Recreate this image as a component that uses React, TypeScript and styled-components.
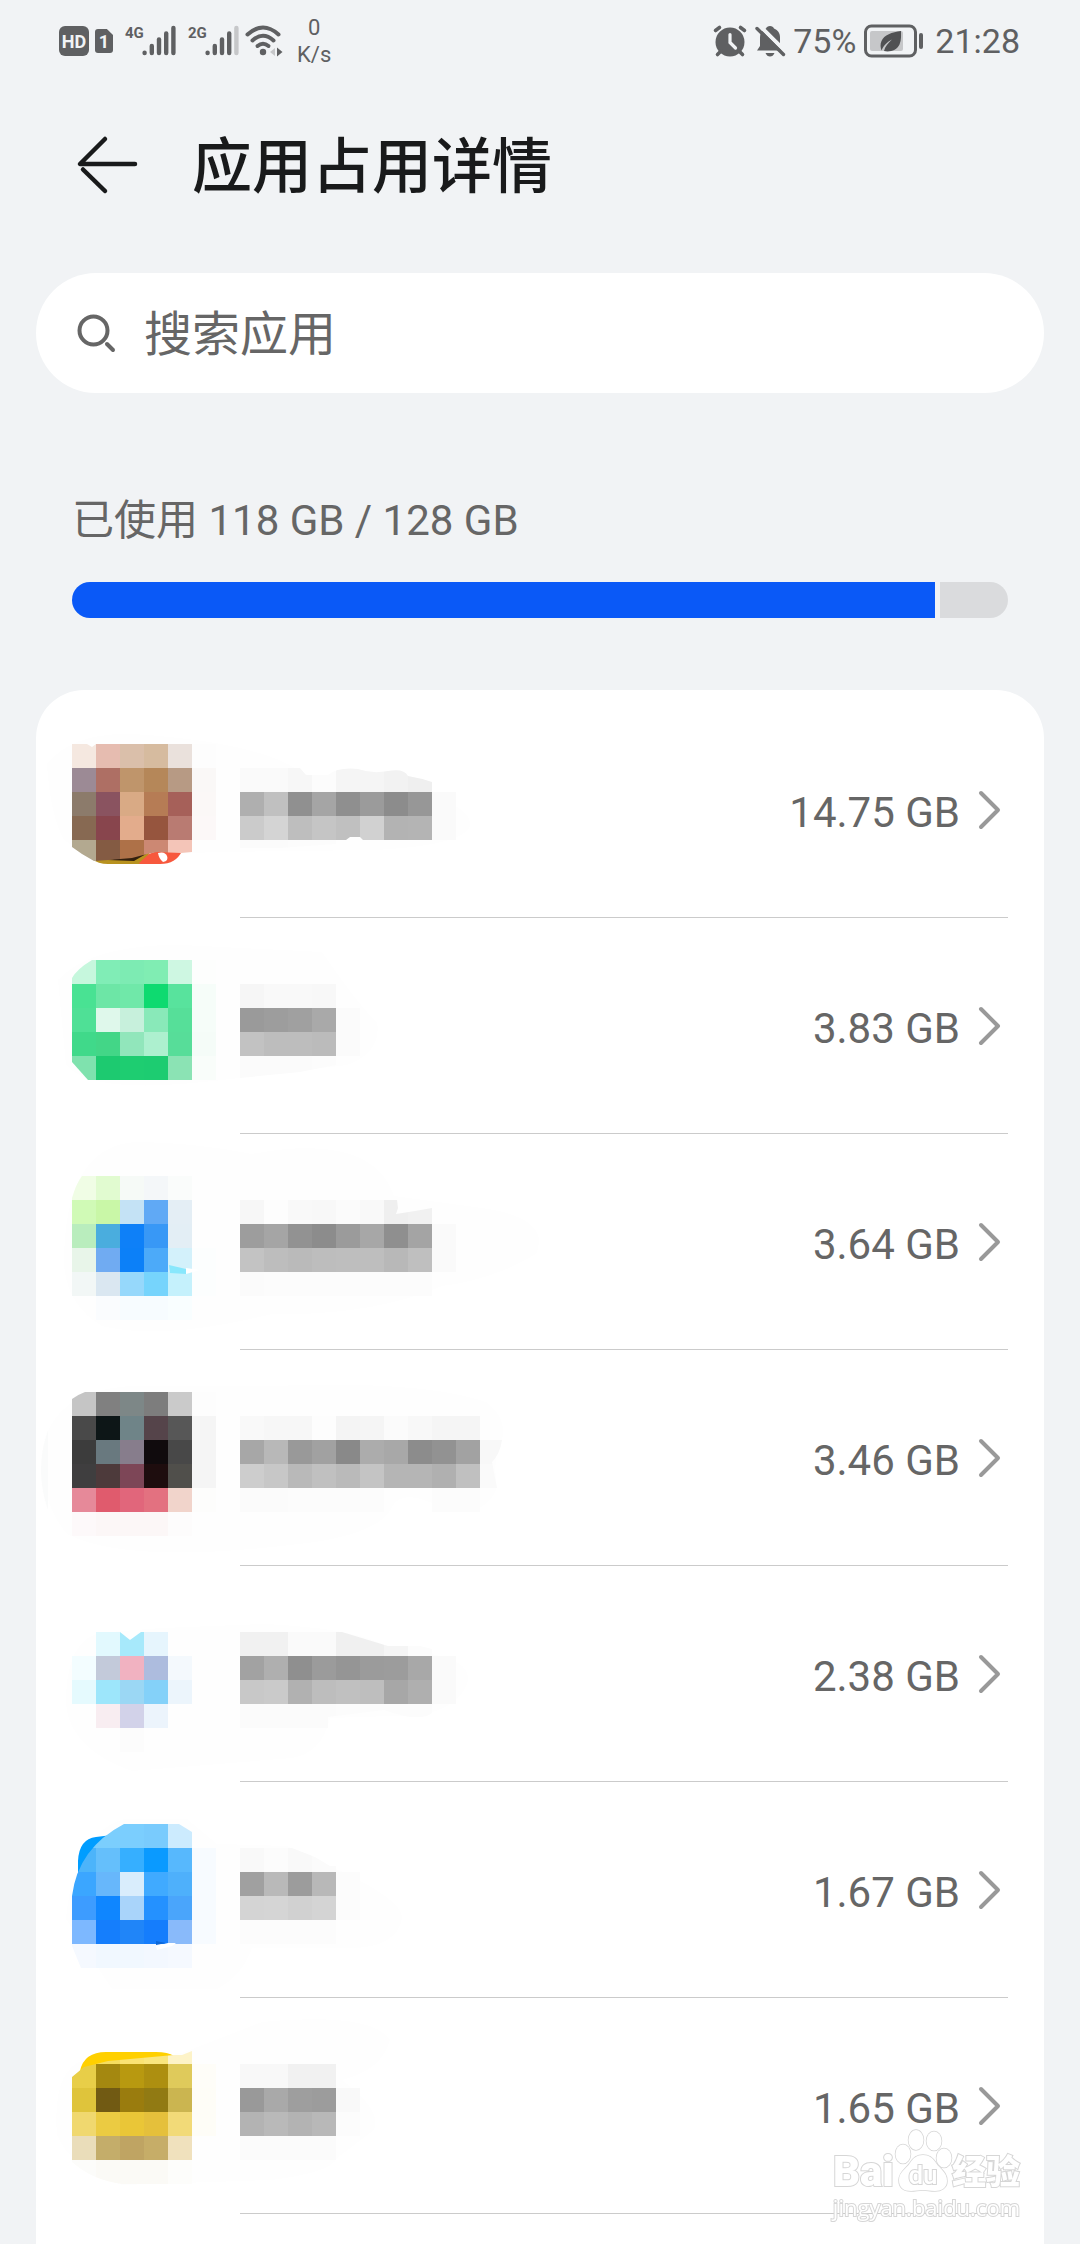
import React from "react";
import styled, { createGlobalStyle } from "styled-components";

const GlobalStyle = createGlobalStyle`
  * { box-sizing: border-box; }
  body {
    margin: 0;
    background: #f1f3f5;
    font-family: Roboto, "Noto Sans CJK SC", sans-serif;
    color: #666;
  }
  button, input { font: inherit; color: inherit; border: 0; padding: 0; background: none; }
  svg { display: block; flex: none; overflow: visible; }
`;

const Page = styled.div`
  display: flex;
  flex-direction: column;
  height: 100vh;
  overflow: hidden;
`;

/* ---------- status bar ---------- */

const StatusBar = styled.div`
  display: flex;
  justify-content: space-between;
  align-items: center;
  height: 82px;
  padding: 0 60px 0 59px;
  flex: none;
  color: #5f6062;
`;

const StatusGroup = styled.div<{ $gap: number }>`
  display: flex;
  align-items: center;
  gap: ${(p) => p.$gap}px;
`;

const HdBadge = styled.span`
  width: 30px;
  height: 30px;
  border-radius: 6px;
  background: #5f6062;
  color: #f1f3f5;
  font-size: 18px;
  font-weight: 700;
  line-height: 31px;
  text-align: center;
`;

const SimBadge = styled.span`
  width: 18px;
  height: 24px;
  border-radius: 3px;
  background: #5f6062;
  clip-path: polygon(0 0, 66% 0, 100% 25%, 100% 100%, 0 100%);
  color: #f1f3f5;
  font-size: 18px;
  font-weight: 700;
  line-height: 25px;
  text-align: center;
`;

const Signal = styled.span`
  display: flex;
  align-items: flex-start;
  height: 32px;
  margin-left: 6px;
`;

const SignalLabel = styled.span`
  width: 17px;
  font-size: 15px;
  font-weight: 700;
  line-height: 16px;
`;

const Speed = styled.span`
  margin-left: 8px;
  font-size: 22px;
  line-height: 27px;
  text-align: center;
`;

const StatusText = styled.span`
  font-size: 34px;
  line-height: 40px;
`;

const SignalBars = ({ level }: { level: number }) => (
  <svg width="34" height="32" viewBox="0 0 34 32" strokeWidth="4.4" strokeLinecap="round">
    {[27.8, 21, 14.5, 8.5, 3].map((y, i) => (
      <path key={y} d={`M${2.6 + i * 7.2} ${y}V28`} stroke={i < level ? "#5f6062" : "#c6c7c9"} />
    ))}
  </svg>
);

const Wifi = () => (
  <svg width="38" height="32" viewBox="0 0 38 32" fill="none" stroke="#5f6062" strokeWidth="4" strokeLinecap="round">
    <path d="M2.5 9.5Q18 -4.500 33.500 9.500" />
    <path d="M7.500 15.500Q18 6 28.500 15.500" />
    <path d="M12.500 21Q18 16.500 23.500 21" />
    <circle cx="18" cy="27" r="3.200" fill="#5f6062" stroke="none" />
    <path d="M25 27l5-4v8z" fill="#c6c7c9" stroke="none" />
    <path d="M32 22.500l5.500 4.500-5.500 4.500z" fill="#5f6062" stroke="none" />
  </svg>
);

const Alarm = () => (
  <svg width="34" height="32" viewBox="0 0 34 32">
    <circle cx="17" cy="17" r="14.500" fill="#5f6062" />
    <path d="M2.500 5.500L6.500 2.500M31.500 5.500L27.500 2.500M4.500 29.500L8 26M29.500 29.500L26 26" stroke="#5f6062" strokeWidth="3.600" strokeLinecap="round" />
    <path d="M17 9.500V17.500L22.500 23" fill="none" stroke="#f1f3f5" strokeWidth="3.200" strokeLinecap="round" />
  </svg>
);

const BellOff = () => (
  <svg width="30" height="32" viewBox="0 0 30 32">
    <path d="M15 1c2 0 3.500 1 4 2.500 4 1.500 6 5 6 9V21l3 4.500H2L5 21v-8.500c0-4 2-7.500 6-9C11.500 2 13 1 15 1z" fill="#5f6062" />
    <path d="M10.500 28h9c-1 2.500-2.500 3.500-4.500 3.500s-3.500-1-4.500-3.500z" fill="#5f6062" />
    <path d="M4 0L31 27" stroke="#f1f3f5" strokeWidth="4" />
    <path d="M2 3.500L28.500 29.500" stroke="#5f6062" strokeWidth="3.400" strokeLinecap="round" />
  </svg>
);

const Battery = () => (
  <svg width="63" height="34" viewBox="0 0 63 34">
    <rect x="1.500" y="2" width="50" height="30" rx="6" fill="none" stroke="#5f6062" strokeWidth="3" />
    <rect x="6" y="7" width="33" height="20" rx="2" fill="#c6c7c9" />
    <rect x="55" y="9" width="4" height="16" rx="2" fill="#5f6062" />
    <path d="M37 7C28 8 20 11 17.500 17c-1.500 3.500-1 6.500 0 9.500C20 21 23 18 28 15.500 24 19 21 22.500 20 27c6 1.500 13-1 15.500-6.500C37.500 16 37 11 37 7z" fill="#505153" />
  </svg>
);

/* ---------- header and search ---------- */

const Header = styled.header`
  display: flex;
  align-items: center;
  gap: 54px;
  height: 164px;
  padding: 0 72px;
  flex: none;
`;

const BackButton = styled.button`
  width: 66px;
  height: 66px;
`;

const Title = styled.h1`
  margin: 0;
  padding-top: 8px;
  font-size: 60px;
  font-weight: 500;
  line-height: 80px;
  color: #191a1b;
`;

const SearchBox = styled.label`
  display: flex;
  align-items: center;
  gap: 28px;
  height: 120px;
  margin: 27px 36px 0;
  padding: 0 40px;
  flex: none;
  border-radius: 60px;
  background: #fff;
`;

const SearchInput = styled.input`
  flex: 1;
  min-width: 0;
  height: 80px;
  padding-top: 3px;
  outline: none;
  font-size: 48px;
  &::placeholder { color: #666; opacity: 1; }
`;

/* ---------- usage ---------- */

const Usage = styled.section`
  display: flex;
  flex-direction: column;
  gap: 30px;
  padding: 96px 72px 72px;
  flex: none;
`;

const UsageText = styled.p`
  margin: 0;
  font-size: 42px;
  line-height: 63px;
`;

const Meter = styled.div`
  display: flex;
  gap: 5px;
  height: 36px;
  border-radius: 18px;
  overflow: hidden;
`;

const Used = styled.div`
  background: #0a59f7;
`;

const Free = styled.div`
  flex: 1;
  background: #dadbdd;
`;

/* ---------- app list ---------- */

const List = styled.ul`
  flex: 1;
  min-height: 0;
  margin: 0 36px;
  padding: 12px 0 0;
  list-style: none;
  border-radius: 48px 48px 0 0;
  background: #fff;
`;

const Row = styled.button`
  display: flex;
  gap: 24px;
  width: 100%;
  padding: 0 36px;
  text-align: left;
`;

const RowBody = styled.span`
  display: flex;
  align-items: center;
  flex: 1;
  height: 216px;
  border-bottom: 1px solid #cbcbcb;
`;

const Size = styled.span`
  flex: 1;
  padding-top: 6px;
  font-size: 42px;
  line-height: 56px;
  text-align: right;
`;

const Chevron = () => (
  <svg width="48" height="40" viewBox="0 0 48 40" fill="none" stroke="#999" strokeWidth="4" strokeLinecap="round" strokeLinejoin="round">
    <path d="M21 3L38 20L21 37" />
  </svg>
);

type Patch = { d: string; fill: string };
type Mosaic = {
  /* one string per 24px row, six hex digits per cell, "-" for an empty cell */
  rows: string[];
  clip?: string;
  under?: Patch[];
  over?: Patch[];
};
type AppEntry = { id: string; size: string; icon: Mosaic; name: Mosaic };

const CELL = 24;

const MosaicArt = ({ id, art, width }: { id: string; art: Mosaic; width: number }) => (
  <svg width={width} height="216" viewBox={`0 -42 ${width} 216`} aria-hidden="true">
    {art.clip && (
      <clipPath id={id}>
        <path d={art.clip} />
      </clipPath>
    )}
    {art.under?.map((p) => <path key={p.d} d={p.d} fill={p.fill} />)}
    <g clipPath={art.clip ? `url(#${id})` : undefined} shapeRendering="crispEdges">
      {art.rows.map((row, y) =>
        row.split(" ").map((c, x) =>
          c === "-" || c === "" ? null : (
            <rect key={`${x}-${y}`} x={x * CELL} y={y * CELL} width={CELL} height={CELL} fill={`#${c}`} />
          )
        )
      )}
    </g>
    {art.over?.map((p) => <path key={p.d} d={p.d} fill={p.fill} />)}
  </svg>
);

const HAZE = "#fefefe";

const apps: AppEntry[] = [
  {
    id: "a1",
    size: "14.75 GB",
    icon: {
      rows: [
        "f5e8e0 e6bcb0 dabfaa d6bb9f eae1dc fdfdfd",
        "9c8a95 ae6f64 bf956b b58759 b79a84 faf8f7",
        "8c7b6b 8a5360 d9aa85 b67c55 a66059 fbf8f7",
        "876952 88454d e3ac8c 96553e b97b72 fcf8f8",
        "b3a990 845b43 ae7148 cc8873 f4c5b8 -",
      ],
      clip: "M0 0H15L20 3L24 0H144V108H120L109 109L85 108L75 110L60 114L36 116L22 117L10 110L0 103Z",
      under: [
        { d: "M-25 20Q0 -12 60 -10Q190 -2 232 30L330 48Q400 58 398 82Q390 102 300 106L140 108Q20 118 -8 96Q-22 70 -25 20Z", fill: HAZE },
        { d: "M20 115Q26 120 36 120H72L78 108L50 112Z", fill: "#b8921f" },
        { d: "M36 116L74 110L62 117Z", fill: "#33200e" },
        { d: "M67 119L77 110L85 107H110Q104 120 88 120H68Z", fill: "#f7583d" },
      ],
      over: [{ d: "M86 109Q93 107 95 112T91 118Q87 115 86 109Z", fill: "#fff" }],
    },
    name: {
      rows: [
        "",
        "fafafa fafafa f7f7f7 fcfcfc f5f5f5 f5f5f5 f2f2f2 efefef",
        "afafaf c0c0c0 909090 a5a5a5 8f8f8f 9b9b9b 8c8c8c 979797 fafafa",
        "cbcbcb d4d4d4 bebebe c5c5c5 c0c0c0 d1d1d1 b3b3b3 b4b4b4 fafafa",
        "fbfbfb fbfbfb fcfcfc fcfcfc",
      ],
      clip: "M0 24H60L66 31H88Q98 23 118 25Q132 30 148 27T168 32Q180 34 192 38V48H216V96H123L120 93H110L106 96L95 100L40 104H0Z",
    },
  },
  {
    id: "a2",
    size: "3.83 GB",
    icon: {
      rows: [
        "c6f7dd 80edb6 7debb3 80edb3 cef7e2 fdfefd",
        "49e293 6de6a6 70e8a9 0eda70 58e39d f6fdf9",
        "4fe096 dff8eb c7f0dc 89e9b9 56df99 f6fdf9",
        "40d98a 43d687 91e6bb adf0cf 57dd99 f5fcf8",
        "7fe2ae 1dca70 1ecd71 1dcc71 8be3b4 f9fdfa",
      ],
      clip: "M20 0H144V120H16L0 102V18Q5 9 20 0Z",
      under: [{ d: "M-14 20Q20 -16 110 -15L250 -8Q290 50 305 62Q310 92 275 105L150 120Q20 136 -6 105Z", fill: HAZE }],
    },
    name: {
      rows: [
        "",
        "f6f6f6 f9f9f9 f9f9f9 f8f8f8",
        "9a9a9a 9d9d9d a0a0a0 a9a9a9 fbfbfb",
        "c2c2c2 bdbdbd bdbdbd bbbbbb fbfbfb",
        "fbfbfb fbfbfb fbfbfb fcfcfc",
      ],
      clip: "M0 24H120V96H96V105L60 112L0 118Z",
    },
  },
  {
    id: "a3",
    size: "3.64 GB",
    icon: {
      rows: [
        "f0fde5 e1fbd0 f6faf7 f4f7f9 fafcfb -",
        "d0fab6 c9f7a7 c4e2f5 60a9f5 e4eef5 -",
        "b9edbd 4aadde 0e80f8 3898f6 e3eef5 -",
        "e8f5e9 70abf2 0c80f8 4caaf9 d3f1fb fcfefe",
        "f2f7f6 dae7f1 96d8fb 76d4fc c5f1fc fcfefe",
        "- fafcfe f7fcff f7fcff f9feff",
      ],
      clip: "M10 0H144V144H0V22Q4 8 10 0Z",
      under: [{ d: "M-8 88Q-8 -28 62 -34Q120 -34 180 -22Q300 -44 322 20L410 32Q480 42 464 78Q420 104 370 110Q300 140 200 138Q90 165 30 150Q-5 130 -8 88Z", fill: HAZE }],
      over: [
        { d: "M97 89L114 93V98L98 97Z", fill: "#88e7fc" },
        { d: "M114 92L128 94L114 98Z", fill: "#fff" },
      ],
    },
    name: {
      rows: [
        "",
        "f7f7f7 fdfdfd f9f9f9 f8f8f8 fbfbfb f9f9f9 efefef f1f1f1",
        "9d9d9d a5a5a5 929292 8c8c8c 9b9b9b a7a7a7 8f8f8f a4a4a4 fafafa",
        "c3c3c3 bdbdbd bababa bdbdbd bebebe bebebe b8b8b8 bfbfbf fafafa",
        "fbfbfb fcfcfc fcfcfc fcfcfc fcfcfc fcfcfc fcfcfc fcfcfc",
      ],
      clip: "M0 24H157L158 32L156 38L175 35L192 32V48H216V96H192V120H0Z",
    },
  },
  {
    id: "a4",
    size: "3.46 GB",
    icon: {
      rows: [
        "c5c5c5 808080 7d8787 7d7d7d cacaca fdfdfd",
        "494949 0d1617 6f8488 55444a 575757 f5f5f5",
        "3c3c3c 69797f 877d8c 100b0d 484848 f5f5f5",
        "3f3e3f 4d3a3b 7d4657 1e0d0e 504f4b f5f5f5",
        "e68999 e05b6d e1667b e37180 f1d4cb fdfdfc",
        "fdf9fa fcf7f7 fcf7f7 fcf7f7 fdfcfc",
      ],
      clip: "M13 0H144V144H0V7Q5 3 13 0Z",
      under: [
        { d: "M-30 60Q-20 -2 60 -6H200Q350 -12 414 10Q435 25 430 48Q420 66 425 95Q415 125 375 118Q330 94 320 115Q310 138 250 149Q60 175 -5 142Q-32 110 -30 60Z", fill: HAZE },
        { d: "M-24 38V118Q-38 78 -24 38Z", fill: "#fafbfb" },
      ],
    },
    name: {
      rows: [
        "",
        "f9f9f9 f7f7f7 f7f7f7 fdfdfd f4f4f4 f5f5f5 fbfbfb f8f8f8 f5f5f5 f5f5f5",
        "a7a7a7 b8b8b8 999999 a1a1a1 898989 acacac a8a8a8 8c8c8c 929292 a2a2a2 f8f8f8",
        "cdcdcd c7c7c7 b9b9b9 c0c0c0 bababa c4c4c4 b5b5b5 b5b5b5 b0b0b0 c0c0c0 fafafa",
        "fbfbfb fbfbfb fcfcfc fcfcfc fcfcfc fcfcfc - - fcfcfc fcfcfc",
      ],
      clip: "M0 24H240V48H262Q260 62 252 70L257 96H240V120H0Z",
    },
  },
  {
    id: "a5",
    size: "2.38 GB",
    icon: {
      rows: [
        "",
        "- e2f9fe a7e9fb e6f5fd",
        "f3fdff c3cada f1b2c1 adbcde f4f9fd",
        "e5fafe 9de6fb 9bd7f4 84d1f9 ecf5fc",
        "- f8edf1 d2d2e9 ecf4fc",
        "- - fcfcfc",
      ],
      clip: "M0 0H48V24L58 32L69 24V0H144V144H0Z",
      under: [{ d: "M-6 92Q-5 24 38 24L90 20L190 16Q290 20 320 42Q398 45 396 72Q390 98 350 107L258 110Q250 145 220 150L60 163Q-5 140 -6 92Z", fill: HAZE }],
    },
    name: {
      rows: [
        "",
        "f1f1f1 f1f1f1 fafafa fafafa f0f0f0 f0f0f0 f5f5f5 fcfcfc",
        "a2a2a2 afafaf 8f8f8f 9b9b9b 959595 9b9b9b 9c9c9c a8a8a8 fafafa",
        "c8c8c8 cacaca b1b1b1 bdbdbd c0c0c0 bebebe a7a7a7 afafaf fafafa",
        "fbfbfb fbfbfb fbfbfb fbfbfb fcfcfc fcfcfc fcfcfc fcfcfc",
      ],
      clip: "M0 24H102L148 38H180L192 41V48H216V96H192V105Q180 115 144 102L88 109V120H0Z",
    },
  },
  {
    id: "a6",
    size: "1.67 GB",
    icon: {
      rows: [
        "78cbfc 7bcefd 7bcefe 79cbfd ccebfe",
        "4cb4fa 65bffb 36afff 0a9aff 57b8fd f7fbff",
        "3ba6ff 67b7fb d9edfc 40aaff 4eb0fb f7fbff",
        "3d9cff 0f86ff a9d4fa 2491ff 4aa5fb f7fbff",
        "7db8ff 157efc 2085f8 157dfc 89bafa f7fbff",
        "f5f9ff f1f8ff f1f8ff f3f8ff f5f9ff",
      ],
      clip: "M52 0H107L120 8V24H144V120H120V144H9L0 122V72Q6 24 52 0Z",
      under: [
        { d: "M-6 95Q2 10 52 -5H115L145 20L215 22L262 44Q330 75 330 94Q325 126 270 124H180Q170 152 145 165H40Z", fill: HAZE },
        { d: "M6 60V37Q7 15 24 13L40 11L24 42L6 72Z", fill: "#009dff" },
      ],
      over: [
        { d: "M84 117L94 119L84 121Z", fill: "#0b67d8" },
        { d: "M84 122L96 119H104L100 122L85 126Z", fill: "#fff" },
      ],
    },
    name: {
      rows: [
        "",
        "f9f9f9 fcfcfc f9f9f9 fbfbfb",
        "a0a0a0 b9b9b9 9c9c9c b8b8b8 fcfcfc",
        "d4d4d4 d5d5d5 d1d1d1 d4d4d4 fcfcfc",
        "fcfcfc fcfcfc fcfcfc fcfcfc",
      ],
      clip: "M0 24H52L75 33L90 42H96V48H120V96H96V120H0Z",
    },
  },
  {
    id: "a7",
    size: "1.65 GB",
    icon: {
      rows: [
        "f2d640 f6de60 fae374 fae67e fdf3c8",
        "e8ce48 a48810 b89910 ad8f10 dfca5b fefdf8",
        "dfc43b 715a13 9a7c0e 917a13 cbb550 fefdf7",
        "f0d86f ebcb42 eac637 e5c03b f2da78 fefdf7",
        "eaddba c4ad6a bfa463 c6ad68 f0e1bd",
        "fcfcfa fbfaf6 fbfaf6 fbfaf6 fdfdfb",
      ],
      clip: "M0 37L12 27L36 21L102 15H110L120 11V24H144V120H120V144H50Q20 140 0 122Z",
      under: [
        { d: "M-15 95Q-20 30 12 20L110 13L190 -18Q300 -28 318 0Q310 30 270 40Q310 70 302 90L265 118Q260 132 200 140L50 145Q0 130 -15 95Z", fill: HAZE },
        { d: "M8 31Q12 12 34 12H84Q96 12 102 16L75 21L24 26Z", fill: "#ffd000" },
      ],
    },
    name: {
      rows: [
        "",
        "f8f8f8 f8f8f8 f1f1f1 f1f1f1",
        "999999 a9a9a9 9e9e9e 9c9c9c f9f9f9",
        "b3b3b3 b9b9b9 b3b3b3 b8b8b8 fcfcfc",
        "fbfbfb fbfbfb fbfbfb fbfbfb",
      ],
    },
  },
];

/* ---------- watermark ---------- */

const Watermark = styled.div`
  position: fixed;
  right: 60px;
  bottom: 22px;
  display: flex;
  flex-direction: column;
  align-items: center;
  color: #fff;
  -webkit-text-stroke: 2px #d6d6d6;
  paint-order: stroke fill;
  pointer-events: none;
`;

const WatermarkLogo = styled.div`
  display: flex;
  align-items: flex-end;
  height: 64px;
`;

const WatermarkWord = styled.span<{ $size: number }>`
  font-size: ${(p) => p.$size}px;
  line-height: 40px;
  font-weight: 900;
`;

const WatermarkUrl = styled.span`
  font-family: "Open Sans", sans-serif;
  font-size: 22px;
  line-height: 30px;
`;

const Paw = () => (
  <svg width="58" height="64" viewBox="0 0 58 64" fill="#fff" stroke="#d6d6d6" strokeWidth="1.500">
    <ellipse cx="9" cy="26" rx="7.500" ry="9.500" />
    <ellipse cx="22" cy="12" rx="7.500" ry="10" />
    <ellipse cx="40" cy="13" rx="7.500" ry="9.500" />
    <ellipse cx="50" cy="30" rx="7.500" ry="9.500" />
    <path d="M29 27c6 0 10 3 13 8 4 6 11 9 11 18 0 7-6 10-12 10-5 0-8-1-12-1s-8 1-12 1C10 63 5 60 5 52c0-8 7-11 11-17 3-5 7-8 13-8z" />
    <text x="29" y="56" textAnchor="middle" fontFamily="Roboto, sans-serif" fontSize="26" fontWeight="500" strokeWidth="2">
      du
    </text>
  </svg>
);

const TOTAL_GB = 128;
const USED_GB = 118;

export default function App() {
  return (
    <Page>
      <GlobalStyle />
      <StatusBar>
        <StatusGroup $gap={6}>
          <HdBadge>HD</HdBadge>
          <SimBadge>1</SimBadge>
          <Signal>
            <SignalLabel>4G</SignalLabel>
            <SignalBars level={5} />
          </Signal>
          <Signal>
            <SignalLabel>2G</SignalLabel>
            <SignalBars level={4} />
          </Signal>
          <Wifi />
          <Speed>
            0<br />
            K/s
          </Speed>
        </StatusGroup>
        <StatusGroup $gap={8}>
          <Alarm />
          <BellOff />
          <StatusText>75%</StatusText>
          <Battery />
          <StatusText>21:28</StatusText>
        </StatusGroup>
      </StatusBar>

      <Header>
        <BackButton aria-label="返回">
          <svg width="66" height="66" viewBox="0 0 66 66" fill="none" stroke="#191a1b" strokeWidth="4.500" strokeLinecap="round" strokeLinejoin="round">
            <path d="M33 8L8 33H63" />
            <path d="M11 38.500L33 60" />
          </svg>
        </BackButton>
        <Title>应用占用详情</Title>
      </Header>

      <SearchBox>
        <svg width="40" height="40" viewBox="0 0 40 40" fill="none" stroke="#666" strokeWidth="4" strokeLinecap="round">
          <circle cx="17.500" cy="17.500" r="14" />
          <path d="M31 31L37 37" />
        </svg>
        <SearchInput type="search" placeholder="搜索应用" aria-label="搜索应用" />
      </SearchBox>

      <Usage>
        <UsageText>
          已使用 {USED_GB} GB / {TOTAL_GB} GB
        </UsageText>
        <Meter role="meter" aria-valuenow={USED_GB} aria-valuemin={0} aria-valuemax={TOTAL_GB} aria-label="已使用">
          <Used style={{ width: `${(USED_GB / TOTAL_GB) * 100}%` }} />
          <Free />
        </Meter>
      </Usage>

      <List>
        {apps.map((app) => (
          <li key={app.id}>
            <Row>
              <MosaicArt id={`${app.id}-icon`} art={app.icon} width={144} />
              <RowBody>
                <MosaicArt id={`${app.id}-name`} art={app.name} width={264} />
                <Size>{app.size}</Size>
                <Chevron />
              </RowBody>
            </Row>
          </li>
        ))}
      </List>

      <Watermark aria-hidden="true">
        <WatermarkLogo>
          <WatermarkWord $size={42}>Bai</WatermarkWord>
          <Paw />
          <WatermarkWord $size={34}>经验</WatermarkWord>
        </WatermarkLogo>
        <WatermarkUrl>jingyan.baidu.com</WatermarkUrl>
      </Watermark>
    </Page>
  );
}
